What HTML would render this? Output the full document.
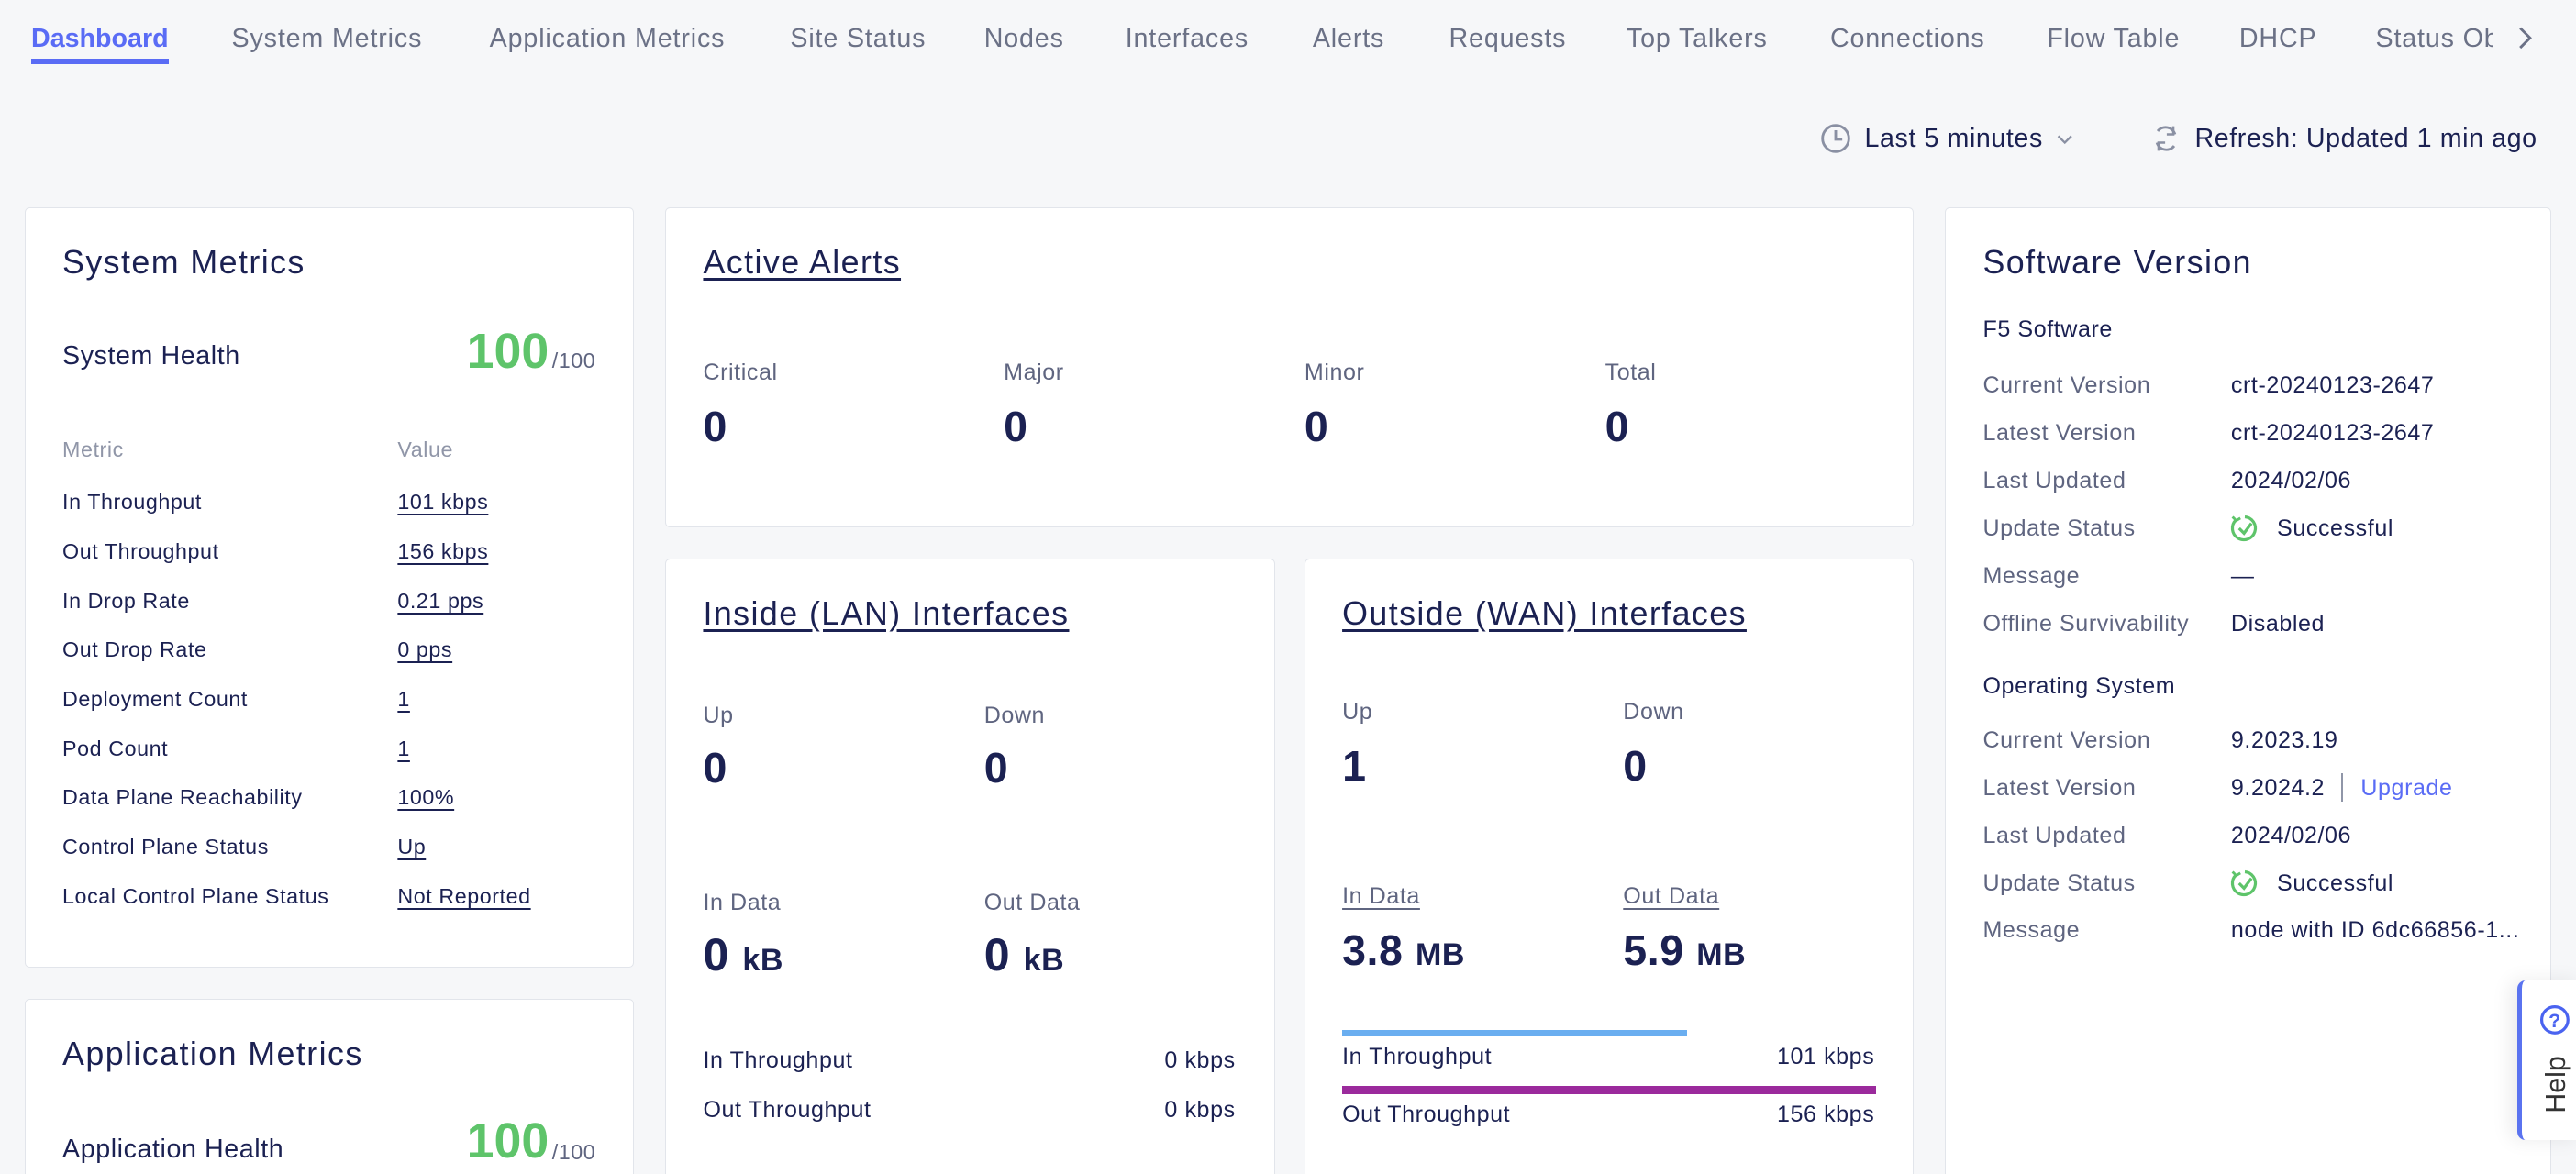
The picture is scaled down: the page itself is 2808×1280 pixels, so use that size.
<!DOCTYPE html>
<html><head><meta charset="utf-8"><style>
*{margin:0;padding:0;box-sizing:border-box}
html,body{width:2808px;height:1280px;overflow:hidden;background:#f6f7f9}
#r{position:absolute;left:0;top:0;width:1568px;height:715px;zoom:1.7908;font-family:"Liberation Sans",sans-serif;color:#1b2152;overflow:hidden;letter-spacing:0.02em}
.a{position:absolute;white-space:nowrap;line-height:20px;margin-top:1px}
.tab{font-size:16px;color:#6b7186;top:13px;letter-spacing:0.03em}
.card{position:absolute;background:#fff;border:1px solid #e2e5eb;border-radius:3px}
.t{font-size:20px;top:148px;line-height:22px;letter-spacing:0.04em}
.u{text-decoration:underline;text-underline-offset:3px}
.s13{font-size:13px}
.g{color:#5f6580}
.lbl{font-size:14px;color:#5f6580}
.big{font-size:26px;font-weight:bold;line-height:30px}
.val{font-size:14px}
</style></head><body><div id="r">
<!-- tabs -->
<div class="a tab" style="left:19px;color:#5a6cf5;font-weight:bold;letter-spacing:0">Dashboard</div>
<div style="position:absolute;left:19px;top:36px;width:84px;height:3px;background:#5a6cf5"></div>
<div class="a tab" style="left:141px">System Metrics</div>
<div class="a tab" style="left:298px">Application Metrics</div>
<div class="a tab" style="left:481px">Site Status</div>
<div class="a tab" style="left:599px">Nodes</div>
<div class="a tab" style="left:685px">Interfaces</div>
<div class="a tab" style="left:799px">Alerts</div>
<div class="a tab" style="left:882px">Requests</div>
<div class="a tab" style="left:990px">Top Talkers</div>
<div class="a tab" style="left:1114px">Connections</div>
<div class="a tab" style="left:1246px">Flow Table</div>
<div class="a tab" style="left:1363px">DHCP</div>
<div class="a tab" style="left:1446px">Status Objects</div>
<div style="position:absolute;left:1518px;top:0;width:50px;height:46px;background:#f6f7f9"></div>
<svg style="position:absolute;left:1530px;top:15px" width="14" height="16" viewBox="0 0 14 16"><path d="M4 2l6 6-6 6" fill="none" stroke="#6b7186" stroke-width="1.6"/></svg>
<!-- time -->
<svg style="position:absolute;left:1108px;top:75px" width="19" height="19" viewBox="0 0 19 19"><circle cx="9.5" cy="9.5" r="8" fill="none" stroke="#8a90a3" stroke-width="1.6"/><path d="M9.5 4.5v5.5h4" fill="none" stroke="#8a90a3" stroke-width="1.6"/></svg>
<div class="a" style="left:1135px;top:74px;font-size:16px">Last 5 minutes</div>
<svg style="position:absolute;left:1251px;top:80px" width="12" height="10" viewBox="0 0 12 10"><path d="M2 3l4 4 4-4" fill="none" stroke="#8a90a3" stroke-width="1.3"/></svg>
<svg style="position:absolute;left:1309px;top:75px" width="19" height="19" viewBox="0 0 19 19"><path d="M15 7A6 6 0 0 0 4.5 5M4 12a6 6 0 0 0 10.5 2" fill="none" stroke="#8a90a3" stroke-width="1.6"/><path d="M14 2v5h-4M5 17v-5h4" fill="none" stroke="#8a90a3" stroke-width="1.4"/></svg>
<div class="a" style="left:1336px;top:74px;font-size:16px">Refresh: Updated 1 min ago</div>

<!-- System Metrics -->
<div class="card" style="left:15px;top:126px;width:371px;height:463px"></div>
<div class="a t" style="left:38px">System Metrics</div>
<div class="a" style="left:38px;top:206px;font-size:16px">System Health</div>
<div class="a" style="left:284px;top:196px;font-size:30px;line-height:34px;font-weight:bold;color:#5ec46a;letter-spacing:0">100</div>
<div class="a s13 g" style="left:336px;top:209px">/100</div>
<div class="a s13" style="left:38px;top:263px;color:#9096a8">Metric</div>
<div class="a s13" style="left:242px;top:263px;color:#9096a8">Value</div>
<div class="a s13" style="left:38px;top:295px">In Throughput</div><div class="a s13 u" style="left:242px;top:295px">101 kbps</div>
<div class="a s13" style="left:38px;top:325px">Out Throughput</div><div class="a s13 u" style="left:242px;top:325px">156 kbps</div>
<div class="a s13" style="left:38px;top:355px">In Drop Rate</div><div class="a s13 u" style="left:242px;top:355px">0.21 pps</div>
<div class="a s13" style="left:38px;top:385px">Out Drop Rate</div><div class="a s13 u" style="left:242px;top:385px">0 pps</div>
<div class="a s13" style="left:38px;top:415px">Deployment Count</div><div class="a s13 u" style="left:242px;top:415px">1</div>
<div class="a s13" style="left:38px;top:445px">Pod Count</div><div class="a s13 u" style="left:242px;top:445px">1</div>
<div class="a s13" style="left:38px;top:475px">Data Plane Reachability</div><div class="a s13 u" style="left:242px;top:475px">100%</div>
<div class="a s13" style="left:38px;top:505px">Control Plane Status</div><div class="a s13 u" style="left:242px;top:505px">Up</div>
<div class="a s13" style="left:38px;top:535px">Local Control Plane Status</div><div class="a s13 u" style="left:242px;top:535px">Not Reported</div>

<!-- App metrics -->
<div class="card" style="left:15px;top:608px;width:371px;height:140px"></div>
<div class="a t" style="left:38px;top:630px">Application Metrics</div>
<div class="a" style="left:38px;top:689px;font-size:16px">Application Health</div>
<div class="a" style="left:284px;top:677px;font-size:30px;line-height:34px;font-weight:bold;color:#5ec46a;letter-spacing:0">100</div>
<div class="a s13 g" style="left:336px;top:691px">/100</div>

<!-- Active alerts -->
<div class="card" style="left:405px;top:126px;width:760px;height:195px"></div>
<div class="a t u" style="left:428px">Active Alerts</div>
<div class="a lbl" style="left:428px;top:216px">Critical</div><div class="a big" style="left:428px;top:244px">0</div>
<div class="a lbl" style="left:611px;top:216px">Major</div><div class="a big" style="left:611px;top:244px">0</div>
<div class="a lbl" style="left:794px;top:216px">Minor</div><div class="a big" style="left:794px;top:244px">0</div>
<div class="a lbl" style="left:977px;top:216px">Total</div><div class="a big" style="left:977px;top:244px">0</div>

<!-- LAN -->
<div class="card" style="left:405px;top:340px;width:371px;height:400px"></div>
<div class="a t u" style="left:428px;top:362px">Inside (LAN) Interfaces</div>
<div class="a lbl" style="left:428px;top:425px">Up</div><div class="a big" style="left:428px;top:452px">0</div>
<div class="a lbl" style="left:599px;top:425px">Down</div><div class="a big" style="left:599px;top:452px">0</div>
<div class="a lbl" style="left:428px;top:539px">In Data</div><div class="a big" style="left:428px;top:566px;font-size:28px">0 <span style="font-size:19px">kB</span></div>
<div class="a lbl" style="left:599px;top:539px">Out Data</div><div class="a big" style="left:599px;top:566px;font-size:28px">0 <span style="font-size:19px">kB</span></div>
<div class="a val" style="left:428px;top:635px">In Throughput</div><div class="a val" style="right:816px;top:635px">0 kbps</div>
<div class="a val" style="left:428px;top:665px">Out Throughput</div><div class="a val" style="right:816px;top:665px">0 kbps</div>

<!-- WAN -->
<div class="card" style="left:794px;top:340px;width:371px;height:400px"></div>
<div class="a t u" style="left:817px;top:362px">Outside (WAN) Interfaces</div>
<div class="a lbl" style="left:817px;top:423px">Up</div><div class="a big" style="left:817px;top:451px">1</div>
<div class="a lbl" style="left:988px;top:423px">Down</div><div class="a big" style="left:988px;top:451px">0</div>
<div class="a lbl u" style="left:817px;top:535px">In Data</div><div class="a big" style="left:817px;top:563px;font-size:26px">3.8 <span style="font-size:19px">MB</span></div>
<div class="a lbl u" style="left:988px;top:535px">Out Data</div><div class="a big" style="left:988px;top:563px;font-size:26px">5.9 <span style="font-size:19px">MB</span></div>
<div style="position:absolute;left:817px;top:627px;width:210px;height:4px;background:#6aaef0"></div>
<div class="a val" style="left:817px;top:633px">In Throughput</div><div class="a val" style="right:427px;top:633px">101 kbps</div>
<div style="position:absolute;left:817px;top:661px;width:325px;height:5px;background:#9b2a9c"></div>
<div class="a val" style="left:817px;top:668px">Out Throughput</div><div class="a val" style="right:427px;top:668px">156 kbps</div>

<!-- Software -->
<div class="card" style="left:1184px;top:126px;width:369px;height:620px"></div>
<div class="a t" style="left:1207px">Software Version</div>
<div class="a val" style="left:1207px;top:190px">F5 Software</div>
<div class="a val g" style="left:1207px;top:224px">Current Version</div><div class="a val" style="left:1358px;top:224px">crt-20240123-2647</div>
<div class="a val g" style="left:1207px;top:253px">Latest Version</div><div class="a val" style="left:1358px;top:253px">crt-20240123-2647</div>
<div class="a val g" style="left:1207px;top:282px">Last Updated</div><div class="a val" style="left:1358px;top:282px">2024/02/06</div>
<div class="a val g" style="left:1207px;top:311px">Update Status</div>
<svg style="position:absolute;left:1357px;top:312px" width="19" height="19" viewBox="0 0 19 19"><path d="M4 4.5A7 7 0 1 0 9.5 2.5" fill="none" stroke="#5ec46a" stroke-width="1.8"/><path d="M2 2.5l2.3 2.3 2.5-1.5" fill="none" stroke="#5ec46a" stroke-width="1.6"/><path d="M6 9.5l3 3 4.5-6" fill="none" stroke="#5ec46a" stroke-width="1.8"/></svg>
<div class="a val" style="left:1386px;top:311px">Successful</div>
<div class="a val g" style="left:1207px;top:340px">Message</div><div class="a val" style="left:1358px;top:340px">—</div>
<div class="a val g" style="left:1207px;top:369px">Offline Survivability</div><div class="a val" style="left:1358px;top:369px">Disabled</div>
<div class="a val" style="left:1207px;top:407px">Operating System</div>
<div class="a val g" style="left:1207px;top:440px">Current Version</div><div class="a val" style="left:1358px;top:440px">9.2023.19</div>
<div class="a val g" style="left:1207px;top:469px">Latest Version</div><div class="a val" style="left:1358px;top:469px">9.2024.2</div>
<div style="position:absolute;left:1425px;top:471px;width:1px;height:17px;background:#9096a8"></div>
<div class="a val" style="left:1437px;top:469px;color:#5a6cf5">Upgrade</div>
<div class="a val g" style="left:1207px;top:498px">Last Updated</div><div class="a val" style="left:1358px;top:498px">2024/02/06</div>
<div class="a val g" style="left:1207px;top:527px">Update Status</div>
<svg style="position:absolute;left:1357px;top:528px" width="19" height="19" viewBox="0 0 19 19"><path d="M4 4.5A7 7 0 1 0 9.5 2.5" fill="none" stroke="#5ec46a" stroke-width="1.8"/><path d="M2 2.5l2.3 2.3 2.5-1.5" fill="none" stroke="#5ec46a" stroke-width="1.6"/><path d="M6 9.5l3 3 4.5-6" fill="none" stroke="#5ec46a" stroke-width="1.8"/></svg>
<div class="a val" style="left:1386px;top:527px">Successful</div>
<div class="a val g" style="left:1207px;top:556px">Message</div><div class="a val" style="left:1358px;top:556px">node with ID 6dc66856-1...</div>

<!-- Help -->
<div style="position:absolute;left:1532px;top:597px;width:40px;height:97px;background:#fff;border-left:3px solid #5a73f0;border-radius:5px 0 0 5px;box-shadow:-4px 0 12px rgba(0,0,0,0.08)"></div>
<svg style="position:absolute;left:1545px;top:611px" width="20" height="20" viewBox="0 0 20 20"><circle cx="10" cy="10" r="8" fill="none" stroke="#4a63f0" stroke-width="1.8"/><text x="10" y="14.5" text-anchor="middle" font-size="12" font-weight="bold" fill="#4a63f0" font-family="Liberation Sans">?</text></svg>
<div class="a" style="left:1541px;top:652px;font-size:17px;color:#333;transform:rotate(-90deg);transform-origin:center;width:30px;text-align:center;letter-spacing:0">Help</div>
</div></body></html>
